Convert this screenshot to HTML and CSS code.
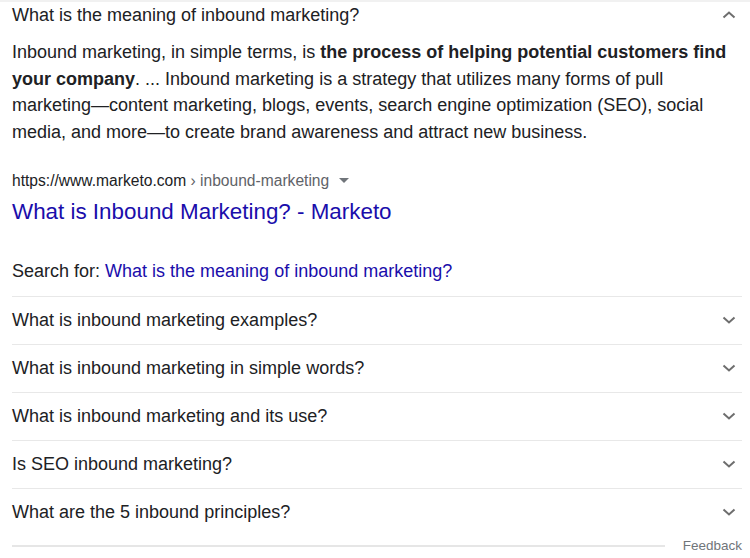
FILE: index.html
```html
<!DOCTYPE html>
<html>
<head>
<meta charset="utf-8">
<link rel="stylesheet" href="styles.css">
</head>
<body>
<div class="card">
  <div class="q-open">
    <span class="q-text">What is the meaning of inbound marketing?</span>
    <svg class="chev" width="14" height="14" viewBox="0 0 14 14"><path d="M1.5 9.5 L7 4.5 L12.5 9.5" fill="none" stroke="#6e6e6e" stroke-width="2"/></svg>
  </div>
  <p class="answer">Inbound marketing, in simple terms, is <b>the process of helping potential customers find your company</b>. ... Inbound marketing is a strategy that utilizes many forms of pull marketing—content marketing, blogs, events, search engine optimization (SEO), social media, and more—to create brand awareness and attract new business.</p>
  <div class="cite"><span class="host">https://www.marketo.com</span><span class="path">&nbsp;› inbound-marketing</span><svg class="tri" width="10" height="6" viewBox="0 0 10 6"><path d="M0 0 H10 L5 5 Z" fill="#70757a"/></svg></div>
  <a class="title">What is Inbound Marketing? - Marketo</a>
  <div class="search">Search for: <a>What is the meaning of inbound marketing?</a></div>
  <ul class="list">
    <li><span>What is inbound marketing examples?</span><svg class="chev" width="14" height="14" viewBox="0 0 14 14"><path d="M1.5 4.5 L7 9.5 L12.5 4.5" fill="none" stroke="#6e6e6e" stroke-width="2"/></svg></li>
    <li><span>What is inbound marketing in simple words?</span><svg class="chev" width="14" height="14" viewBox="0 0 14 14"><path d="M1.5 4.5 L7 9.5 L12.5 4.5" fill="none" stroke="#6e6e6e" stroke-width="2"/></svg></li>
    <li><span>What is inbound marketing and its use?</span><svg class="chev" width="14" height="14" viewBox="0 0 14 14"><path d="M1.5 4.5 L7 9.5 L12.5 4.5" fill="none" stroke="#6e6e6e" stroke-width="2"/></svg></li>
    <li><span>Is SEO inbound marketing?</span><svg class="chev" width="14" height="14" viewBox="0 0 14 14"><path d="M1.5 4.5 L7 9.5 L12.5 4.5" fill="none" stroke="#6e6e6e" stroke-width="2"/></svg></li>
    <li><span>What are the 5 inbound principles?</span><svg class="chev" width="14" height="14" viewBox="0 0 14 14"><path d="M1.5 4.5 L7 9.5 L12.5 4.5" fill="none" stroke="#6e6e6e" stroke-width="2"/></svg></li>
  </ul>
  <div class="footer"><div class="rule"></div><span class="feedback">Feedback</span></div>
</div>
</body>
</html>
```
FILE: styles.css
```css
html, body { margin: 0; padding: 0; background: #fff; }
body { font-family: "Liberation Sans", Arial, sans-serif; color: #202124; width: 750px; height: 558px; overflow: hidden; }
.card { padding: 0 8px 0 12px; border-top: 2px solid #f1f1f1; }
.q-open { display: flex; justify-content: space-between; align-items: center; height: 28px; margin-top: -1px; font-size: 18px; }
.chev { margin-right: 6px; }
.answer { margin: 10px 0 0; font-size: 18px; line-height: 26.7px; padding-right: 8px; }
.answer b { font-weight: bold; }
.cite { margin-top: 25px; font-size: 15.6px; line-height: 20px; display: flex; align-items: center; }
.cite .host { color: #202124; }
.cite .path { color: #5f6368; }
.cite .tri { margin-left: 10px; }
.title { display: block; margin-top: 7px; font-size: 22.4px; line-height: 28px; color: #1a0dab; }
.search { margin-top: 32px; font-size: 18px; line-height: 26px; }
.search a { color: #1a0dab; }
.list { list-style: none; margin: 12px 0 0; padding: 0; }
.list li { display: flex; justify-content: space-between; align-items: center; height: 47px; border-top: 1px solid #e8e8e8; font-size: 18px; }
.footer { display: flex; align-items: center; margin-top: 2px; }
.rule { flex: 1; height: 2px; background: #e6e6e6; margin-top: 2px; }
.feedback { font-size: 13.5px; color: #70757a; margin-left: 18px; }
```
